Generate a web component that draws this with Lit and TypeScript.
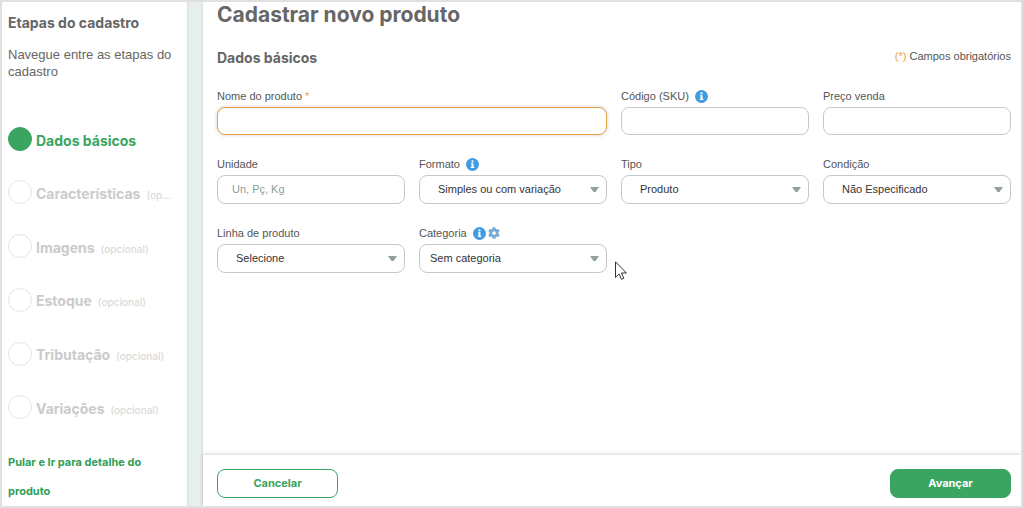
import { LitElement, html, css, svg, nothing } from "lit";
import { customElement, state } from "lit/decorators.js";
import { classMap } from "lit/directives/class-map.js";

interface Step {
  name: string;
  optional: boolean;
}

interface Field {
  id: string;
  label: string;
  kind: "text" | "lookup" | "select";
  value?: string;
  placeholder?: string;
  required?: boolean;
  wide?: boolean;
  tight?: boolean;
  info?: boolean;
  settings?: boolean;
}

const STEPS: Step[] = [
  { name: "Dados básicos", optional: false },
  { name: "Características", optional: true },
  { name: "Imagens", optional: true },
  { name: "Estoque", optional: true },
  { name: "Tributação", optional: true },
  { name: "Variações", optional: true },
];

const FIELDS: Field[] = [
  { id: "nome", label: "Nome do produto", kind: "text", required: true, wide: true },
  { id: "sku", label: "Código (SKU)", kind: "text", info: true },
  { id: "preco", label: "Preço venda", kind: "text" },
  { id: "unidade", label: "Unidade", kind: "lookup", placeholder: "Un, Pç, Kg" },
  { id: "formato", label: "Formato", kind: "select", value: "Simples ou com variação", info: true },
  { id: "tipo", label: "Tipo", kind: "select", value: "Produto" },
  { id: "condicao", label: "Condição", kind: "select", value: "Não Especificado" },
  { id: "linha", label: "Linha de produto", kind: "select", value: "Selecione" },
  { id: "categoria", label: "Categoria", kind: "select", value: "Sem categoria", tight: true, info: true, settings: true },
];

const infoIcon = html`<svg class="icon" viewBox="0 0 13 13" aria-hidden="true">
  ${svg`<circle cx="6.5" cy="6.5" r="6.5" fill="#3f9be2"/>
  <circle cx="6.5" cy="3.4" r="1.1" fill="#fff"/>
  <path d="M5 5.200h2.500v3.600h.8v1.200H4.800V8.800h.8V6.400H5z" fill="#fff"/>`}
</svg>`;

const gearIcon = html`<svg class="icon gear" viewBox="0 0 512 512" aria-hidden="true">
  ${svg`<path fill="#77a9d7" fill-rule="evenodd" d="M487 316l-43-25c4-23 4-47 0-70l43-25c5-3 7-9 6-14-11-36-30-69-55-96-4-4-10-5-15-2l-43 25c-18-16-39-28-61-35V24c0-5-4-10-9-11-37-8-75-8-110 0-6 1-9 6-9 11v50c-23 8-43 20-61 35L87 84c-5-3-11-2-15 2-25 27-44 60-55 96-1 5 1 11 6 14l43 25c-4 23-4 47 0 70l-43 25c-5 3-7 9-6 14 11 36 30 69 55 96 4 4 10 5 15 2l43-25c18 16 39 28 61 35v50c0 5 4 10 9 11 37 8 75 8 110 0 6-1 9-6 9-11v-50c23-8 43-20 61-35l43 25c5 3 11 2 15-2 25-27 44-60 55-96 1-5-1-11-6-14zM256 336a80 80 0 1 1 0-160 80 80 0 0 1 0 160z"/>`}
</svg>`;

@customElement("app-root")
export class AppRoot extends LitElement {
  @state() private current = 0;

  static styles = css`
    :host {
      display: block;
      font-family: "Liberation Sans", Arial, sans-serif;
      font-size: 11px;
      color: #555;
    }
    * {
      box-sizing: border-box;
    }
    h1, h2, p, ol {
      margin: 0;
      padding: 0;
    }
    .page {
      position: relative;
      display: grid;
      grid-template-columns: 185px minmax(0, 1fr);
      column-gap: 16px;
      min-height: 100vh;
      overflow: hidden;
      border: 2px solid #e0e0e0;
      background: #e6efec;
    }
    .display {
      font-family: Inter, Lato, sans-serif;
      font-weight: 700;
    }
    .sidebar {
      display: flex;
      flex-direction: column;
      padding: 12px 8px 0 6px;
      background: #fff;
      box-shadow: 0 0 3px rgba(0, 0, 0, 0.12);
    }
    .sidebar-title {
      font-size: 14px;
      line-height: 18px;
      color: #666;
    }
    .intro {
      margin-top: 14px;
      font-size: 13px;
      line-height: 17px;
      color: #666;
    }
    .steps {
      flex: 1;
      display: flex;
      flex-direction: column;
      justify-content: space-between;
      margin: 47px 0 28px;
      list-style: none;
    }
    .step {
      display: flex;
      align-items: center;
      gap: 4px;
      width: 100%;
      padding: 0;
      border: 0;
      background: none;
      text-align: left;
      color: #cbcbcb;
      font-size: 14px;
      line-height: 20px;
      cursor: pointer;
    }
    .dot {
      flex: none;
      width: 24px;
      height: 24px;
      border: 1px solid #e4e4e4;
      border-radius: 50%;
    }
    .step-text {
      display: flex;
      align-items: baseline;
      gap: 6px;
      min-width: 0;
      padding: 4px 6px 0 0;
      white-space: nowrap;
    }
    .optional {
      min-width: 0;
      overflow: hidden;
      text-overflow: ellipsis;
      font-size: 10px;
      font-weight: 500;
      color: #dadada;
    }
    .active {
      color: #39a561;
    }
    .active .dot {
      border-color: #39a561;
      background: #39a561;
    }
    .skip {
      padding-right: 8px;
      font-size: 11px;
      line-height: 29px;
      color: #2f9e58;
      text-decoration: none;
    }
    .content {
      display: flex;
      flex-direction: column;
      min-width: 0;
      background: #fff;
      box-shadow: 0 0 3px rgba(0, 0, 0, 0.12);
    }
    .form {
      flex: 1;
      padding: 0 10px 20px 14px;
    }
    .title {
      font-size: 21px;
      line-height: 26px;
      color: #666;
    }
    .section-head {
      display: flex;
      justify-content: space-between;
      align-items: flex-start;
      margin-top: 20px;
      line-height: 16px;
    }
    .section-title {
      font-size: 14px;
      line-height: 20px;
      color: #666;
    }
    .mark {
      color: #e6a144;
    }
    .fields {
      display: grid;
      grid-template-columns: repeat(4, minmax(0, 1fr));
      gap: 20px 14px;
      margin-top: 19px;
    }
    .wide {
      grid-column: span 2;
    }
    .label-row {
      display: flex;
      align-items: center;
      gap: 2px;
      height: 18px;
      margin-bottom: 2px;
    }
    .label-row label {
      margin-right: 4px;
      line-height: 18px;
    }
    .icon {
      flex: none;
      display: block;
      width: 13px;
      height: 13px;
    }
    .gear {
      width: 12px;
      height: 12px;
    }
    .control {
      display: block;
      width: 100%;
      height: 29px;
      margin: 0;
      padding: 0 14px 2px;
      border: 1px solid #c8c8c8;
      border-radius: 8px;
      outline: 0;
      background-color: #fff;
      font: inherit;
      color: #333;
    }
    .text {
      height: 28px;
    }
    .control::placeholder {
      color: #87a096;
      opacity: 1;
    }
    .required {
      border-color: #e6a144;
      box-shadow: 0 0 4px rgba(0, 0, 0, 0.18);
    }
    .select {
      padding: 0 24px 2px 18px;
      appearance: none;
      background-image: url("data:image/svg+xml,%3Csvg xmlns='http://www.w3.org/2000/svg' width='9' height='5'%3E%3Cpath d='M0 0h9L5.500 5h-2z' fill='%2393a09c'/%3E%3C/svg%3E");
      background-repeat: no-repeat;
      background-position: right 7px center;
    }
    .tight {
      padding-left: 10px;
    }
    .actions {
      display: flex;
      justify-content: space-between;
      padding: 14px 10px 8px 14px;
      background: #fff;
      box-shadow: 0 -1px 4px rgba(0, 0, 0, 0.16);
    }
    .button {
      width: 121px;
      height: 29px;
      padding: 0 0 2px;
      border: 1px solid #39a561;
      border-radius: 8px;
      background: #fff;
      font-size: 11px;
      color: #39a561;
      cursor: pointer;
    }
    .primary {
      background: #39a561;
      color: #fff;
    }
    .pointer {
      position: absolute;
      left: 613px;
      top: 259px;
      width: 12px;
      height: 19px;
      pointer-events: none;
    }
  `;

  private renderStep(step: Step, index: number) {
    return html`<li>
      <button
        type="button"
        class=${classMap({ step: true, display: true, active: index === this.current })}
        @click=${() => (this.current = index)}
      >
        <span class="dot"></span>
        <span class="step-text">
          <span>${step.name}</span>
          ${step.optional ? html`<span class="optional">(opcional)</span>` : nothing}
        </span>
      </button>
    </li>`;
  }

  private renderField(field: Field) {
    const control =
      field.kind === "select"
        ? html`<select id=${field.id} class=${classMap({ control: true, select: true, tight: !!field.tight })}>
            <option>${field.value}</option>
          </select>`
        : html`<input
            id=${field.id}
            type="text"
            class=${classMap({ control: true, text: field.kind === "text", required: !!field.required })}
            placeholder=${field.placeholder ?? ""}
          />`;
    return html`<div class=${classMap({ wide: !!field.wide })}>
      <div class="label-row">
        <label for=${field.id}
          >${field.label}${field.required ? html` <span class="mark">*</span>` : nothing}</label
        >
        ${field.info ? infoIcon : nothing}${field.settings ? gearIcon : nothing}
      </div>
      ${control}
    </div>`;
  }

  render() {
    return html`<div class="page">
      <aside class="sidebar">
        <h2 class="sidebar-title display">Etapas do cadastro</h2>
        <p class="intro">Navegue entre as etapas do cadastro</p>
        <ol class="steps">
          ${STEPS.map((step, index) => this.renderStep(step, index))}
        </ol>
        <a class="skip display" href="#detalhe">Pular e Ir para detalhe do produto</a>
      </aside>
      <main class="content">
        <section class="form">
          <h1 class="title display">Cadastrar novo produto</h1>
          <div class="section-head">
            <h2 class="section-title display">Dados básicos</h2>
            <p><span class="mark">(*)</span> Campos obrigatórios</p>
          </div>
          <div class="fields">${FIELDS.map((field) => this.renderField(field))}</div>
        </section>
        <footer class="actions">
          <button type="button" class="button display">Cancelar</button>
          <button type="button" class="button primary display">Avançar</button>
        </footer>
      </main>
      <svg class="pointer" viewBox="0 0 12 19" aria-hidden="true">
        <path d="M.5.800v15.700l3.600-3.500 2.400 5.300 2.300-1-2.400-5.300h5z" fill="#fff" stroke="#333" />
      </svg>
    </div>`;
  }
}
